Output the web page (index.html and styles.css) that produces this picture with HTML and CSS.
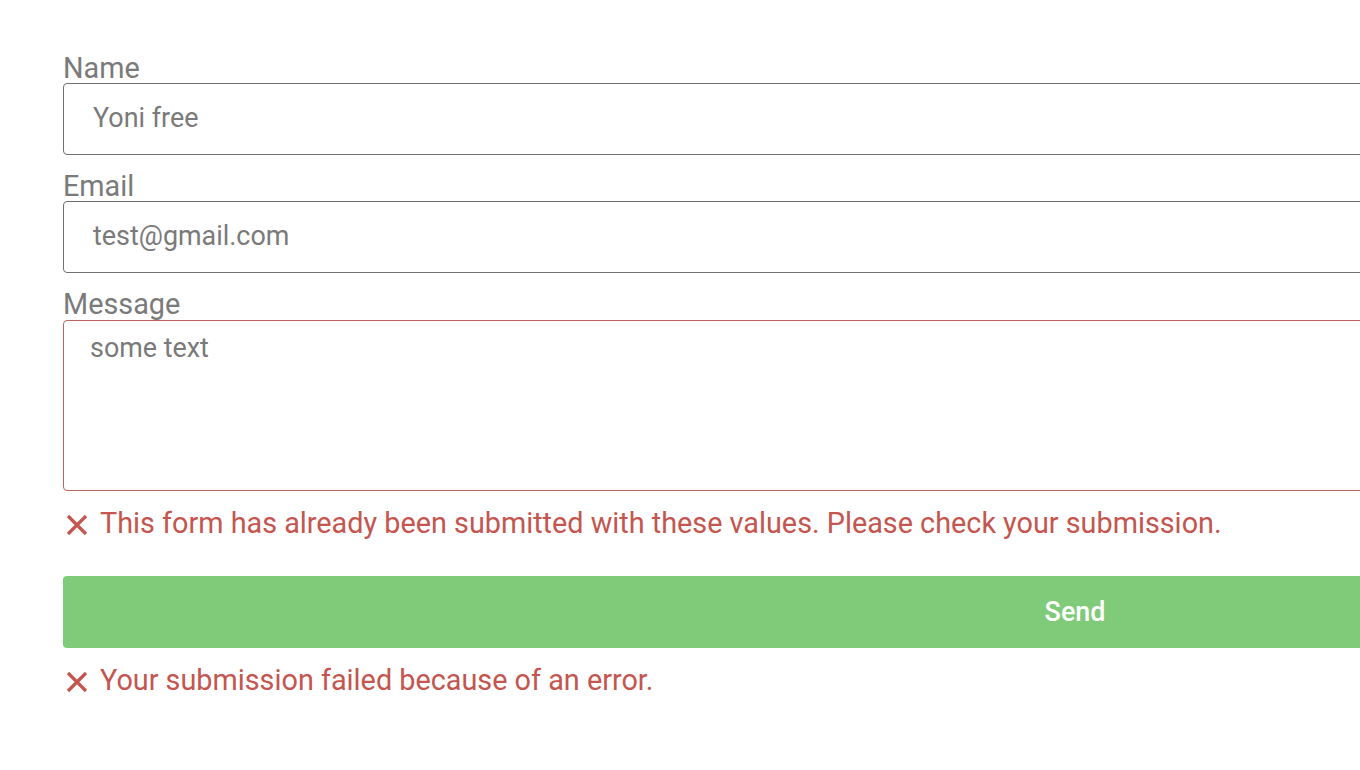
FILE: index.html
```html
<!DOCTYPE html>
<html lang="en">
<head>
<meta charset="utf-8">
<title>Contact form</title>
<link rel="stylesheet" href="styles.css">
</head>
<body>
<form class="form">
  <div class="field">
    <label class="label" for="name">Name</label>
    <input class="input" id="name" type="text" value="Yoni free">
  </div>
  <div class="field">
    <label class="label" for="email">Email</label>
    <input class="input" id="email" type="email" value="test@gmail.com">
  </div>
  <div class="field field-last">
    <label class="label" for="message">Message</label>
    <textarea class="input textarea invalid" id="message">some text</textarea>
  </div>
  <div class="error">
    <svg class="error-icon" viewBox="0 0 22 22" width="22" height="22"><path d="M2 2 L20 20 M20 2 L2 20" stroke="currentColor" stroke-width="3.2" fill="none"/></svg>
    <span>This form has already been submitted with these values. Please check your submission.</span>
  </div>
  <button class="send" type="button">Send</button>
  <div class="error error-submit">
    <svg class="error-icon" viewBox="0 0 22 22" width="22" height="22"><path d="M2 2 L20 20 M20 2 L2 20" stroke="currentColor" stroke-width="3.2" fill="none"/></svg>
    <span>Your submission failed because of an error.</span>
  </div>
</form>
</body>
</html>
```
FILE: styles.css
```css
html, body {
  margin: 0;
  padding: 0;
  background: #ffffff;
  overflow: hidden;
}
body {
  font-family: Roboto, "Liberation Sans", sans-serif;
  font-size: 28.8px;
  color: #777777;
}
.form {
  width: 2024px;
  margin: 53px 0 0 63px;
  display: flex;
  flex-direction: column;
}
.field {
  display: flex;
  flex-direction: column;
  margin-bottom: 16px;
}
.field-last {
  margin-bottom: 0;
}
.label {
  display: block;
  line-height: 30px;
  color: #7a7a7a;
}
.input {
  box-sizing: border-box;
  width: 100%;
  height: 72px;
  border: 1px solid #707070;
  border-radius: 4px;
  padding: 0 29px;
  padding-bottom: 2px;
  font-family: inherit;
  font-size: 26.9px;
  color: #7a7a7a;
  background: #ffffff;
  outline: none;
}
.textarea {
  margin-top: 1px;
  height: 171px;
  padding: 12px 26px;
  resize: none;
  line-height: 30px;
  display: block;
}
.invalid {
  border-color: #c0645d;
}
.error {
  display: flex;
  align-items: center;
  gap: 12px;
  margin-top: 17px;
  line-height: 30px;
  color: #c4554f;
}
.error-icon {
  flex: none;
  margin-left: 3px;
  margin-top: 4px;
  width: 22px;
  height: 22px;
}
.send {
  margin-top: 38px;
  height: 72px;
  width: 100%;
  border: none;
  border-radius: 4px;
  background: #7fcb7a;
  color: #ffffff;
  font-family: inherit;
  font-size: 26.9px;
  font-weight: 500;
  cursor: pointer;
}
.error-submit {
  margin-top: 17px;
}
```
